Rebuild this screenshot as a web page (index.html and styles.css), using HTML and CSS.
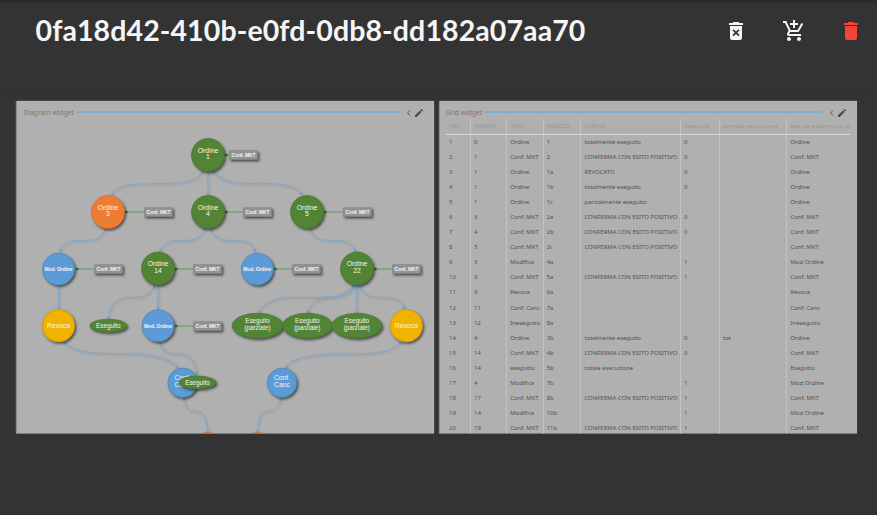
FILE: index.html
```html
<!DOCTYPE html>
<html lang="it">
<head>
<meta charset="utf-8">
<title>Dashboard</title>
<link rel="stylesheet" href="styles.css">
</head>
<body>
<header class="topbar">
  <h1 class="title">0fa18d42-410b-e0fd-0db8-dd182a07aa70</h1>
  <div class="actions">
    <svg class="icon" viewBox="0 0 24 24"><path fill-rule="evenodd" d="M6 19c0 1.1.9 2 2 2h8c1.1 0 2-.9 2-2V7H6v12zM8.500 11.500l1.200-1.200 2.300 2.300 2.300-2.300 1.200 1.200-2.300 2.300 2.300 2.300-1.200 1.200-2.300-2.300-2.300 2.300-1.200-1.200 2.300-2.300zM15.500 4l-1-1h-5l-1 1H5v2h14V4z"/></svg>
    <svg class="icon cart" viewBox="0 0 24 24"><path d="M11 9h2V6h3V4h-3V1h-2v3H8v2h3v3zm-4 9c-1.100 0-1.990.9-1.990 2S5.900 22 7 22s2-.9 2-2-.9-2-2-2zm10 0c-1.100 0-1.990.9-1.990 2s.89 2 1.990 2 2-.9 2-2-.9-2-2-2zm-9.830-3.250l.03-.12.9-1.630h7.450c.75 0 1.410-.41 1.750-1.030l3.860-7.010L19.420 4h-.01l-1.100 2-2.760 5H8.530l-.13-.27L6.160 6l-.95-2-.94-2H1v2h2l3.600 7.590-1.350 2.450c-.16.28-.25.61-.25.960 0 1.100.9 2 2 2h12v-2H7.420c-.13 0-.25-.11-.25-.25z"/></svg>
    <svg class="icon danger" viewBox="0 0 24 24"><path d="M6 19c0 1.100.9 2 2 2h8c1.100 0 2-.9 2-2V7H6v12zM19 4h-3.500l-1-1h-5l-1 1H5v2h14V4z"/></svg>
  </div>
</header>
<main class="widgets">
  <section class="widget">
    <div class="widget-head">
      <span class="widget-name">Diagram widget</span><span class="rule"></span>
      <svg class="tool chevron" viewBox="0 0 5 8"><path d="M4 1.500 1.500 4 4 6.500"/></svg>
      <svg class="tool pencil" viewBox="3 3 18 18"><path d="M3 17.250V21h3.750L17.810 9.940l-3.750-3.750L3 17.250zM20.710 7.040a1 1 0 0 0 0-1.410l-2.340-2.340a1 1 0 0 0-1.410 0l-1.830 1.830 3.750 3.750z"/></svg>
    </div>
    <svg class="diagram" viewBox="17 123 417 310">
      <defs>
        <marker id="blueTip" viewBox="0 0 4 4" refX="3.500" refY="2" markerWidth="2.800" markerHeight="2.800" orient="auto-start-reverse" markerUnits="userSpaceOnUse"><path d="M0 0 4 2 0 4z" fill="#5b9bd5"/></marker>
        <marker id="greenTip" viewBox="0 0 4 4" refX="4" refY="2" markerWidth="3.200" markerHeight="3.200" orient="auto-start-reverse" markerUnits="userSpaceOnUse"><path d="M0 1 4 0V4L0 3z" fill="#1f7a2c"/></marker>
        <filter id="shade" x="-30%" y="-30%" width="170%" height="180%"><feDropShadow dx="1.500" dy="1.700" stdDeviation="1.200" flood-color="#222" flood-opacity=".7"/></filter>
      </defs>
      <g id="links"></g>
      <g id="nodes"></g>
    </svg>
  </section>
  <section class="widget grid-widget">
    <div class="widget-head">
      <span class="widget-name">Grid widget</span><span class="rule"></span>
      <svg class="tool chevron" viewBox="0 0 5 8"><path d="M4 1.500 1.500 4 4 6.500"/></svg>
      <svg class="tool pencil" viewBox="3 3 18 18"><path d="M3 17.250V21h3.750L17.810 9.940l-3.750-3.750L3 17.250zM20.710 7.040a1 1 0 0 0 0-1.410l-2.340-2.340a1 1 0 0 0-1.410 0l-1.830 1.830 3.750 3.750z"/></svg>
    </div>
    <div class="table" id="table"></div>
  </section>
</main>
<script src="app.js"></script>
</body>
</html>
```
FILE: styles.css
```css
* { box-sizing: border-box; }
body {
  margin: 0;
  height: 515px;
  overflow: hidden;
  background: linear-gradient(#272727, #333 5px, #333);
  font-family: "Noto Sans", "Open Sans", sans-serif;
}
.topbar {
  height: 90px;
  padding: 0 14px 0 35.500px;
  display: flex;
  justify-content: space-between;
  align-items: flex-start;
  border-bottom: 1px solid #382f33;
}
.title {
  margin: 12.500px 0 0;
  font: 700 28.500px/34px Lato, "Open Sans", sans-serif;
  letter-spacing: .1px;
  color: #f5f5f5;
  white-space: nowrap;
}
.actions { display: flex; padding-top: 19px; gap: 33.500px; }
.icon { width: 24px; height: 24px; fill: #f5f5f5; }
.danger { fill: #f44336; }
.widgets {
  display: flex;
  gap: 4.500px;
  padding: 11px 0 0 16px;
}
.widget {
  width: 418px;
  height: 332.500px;
  background: #b0b0b0;
  border-left: 1px solid #8b8b8b;
  box-shadow: 0 0 2px #777;
  clip-path: inset(-1px -1px 0 -1px);
  overflow: hidden;
}
.widget-head {
  height: 22px;
  display: flex;
  align-items: center;
  padding: 2px 11px 0 6.500px;
}
.widget-name { font-size: 6.700px; line-height: 10px; color: #777; white-space: nowrap; }
.rule { flex: 1; height: 1.500px; background: #7daed2; margin: 0 7px 2px 3px; }
.tool { display: block; margin-bottom: 1px; }
.chevron { width: 5px; height: 8px; fill: none; stroke: #555; stroke-width: 1; }
.pencil { width: 8px; height: 8px; fill: #4b4b4b; margin-left: 4px; }
.diagram { display: block; width: 417px; height: 310px; font-family: "Liberation Sans", sans-serif; }
.link { fill: none; stroke: #7ea8cd; stroke-width: .9; filter: drop-shadow(1px 1.500px .8px rgba(60, 60, 60, .3)); }
.attach { stroke: #459a4b; stroke-width: .8; }
.shape { stroke-width: .6; filter: url(#shade); }
.green { fill: #538435; stroke: #42702a; }
.blue { fill: #5b9bd5; stroke: #4681b5; }
.orange { fill: #ed7d31; stroke: #ca6826; }
.yellow { fill: #efb300; stroke: #c48f00; }
.tag { fill: #939393; stroke: #808080; }
.caption { fill: #f4f4f4; text-anchor: middle; }
.grid-widget .widget-head { height: 18px; padding: 6px 10.500px 0 6px; }
.table { margin-left: 6.500px; width: 404px; overflow: hidden; }
.row {
  display: grid;
  grid-template-columns: 25px 36.200px 36.500px 37.800px 99.500px 39px 67.500px 62.500px;
  height: 15.050px;
}
.cell {
  padding-left: 3px;
  border-right: 1px solid #c3c3c3;
  font-size: 5.950px;
  line-height: 15px;
  color: #505050;
  white-space: nowrap;
  overflow: hidden;
}
.cell:last-child { border-right: 0; }
.row.head { height: 16px; border-bottom: 1px solid #dadada; }
.head .cell { color: #979797; line-height: 15px; }
```
FILE: app.js
```js
const headers = ["PRG", "PARENT", "TIPO", "PRGOLD", "STATUS", "revisione", "parziale esecuzione", "test da evidenziare pe"];
const OK = "CONFERMA CON ESITO POSITIVO";
const rows = [
  [1, 0, "Ordine", "1", "totalmente eseguito", 0, "", "Ordine"],
  [2, 1, "Conf. MKT", "2", OK, 0, "", "Conf. MKT"],
  [3, 1, "Ordine", "1a", "REVOCATO", 0, "", "Ordine"],
  [4, 1, "Ordine", "1b", "totalmente eseguito", 0, "", "Ordine"],
  [5, 1, "Ordine", "1c", "parzialmente eseguito", "", "", "Ordine"],
  [6, 3, "Conf. MKT", "2a", OK, 0, "", "Conf. MKT"],
  [7, 4, "Conf. MKT", "2b", OK, 0, "", "Conf. MKT"],
  [8, 5, "Conf. MKT", "2c", OK, "", "", "Conf. MKT"],
  [9, 3, "Modifica", "4a", "", 1, "", "Mod Ordine"],
  [10, 9, "Conf. MKT", "5a", OK, 1, "", "Conf. MKT"],
  [11, 9, "Revoca", "6a", "", "", "", "Revoca"],
  [12, 11, "Conf. Canc", "7a", "", "", "", "Conf. Canc"],
  [13, 12, "Ineseguito", "8a", "", "", "", "Ineseguito"],
  [14, 4, "Ordine", "3b", "totalmente eseguito", 0, "tot", "Ordine"],
  [15, 14, "Conf. MKT", "4b", OK, 0, "", "Conf. MKT"],
  [16, 14, "eseguito", "5b", "totale esecuzione", "", "", "Eseguito"],
  [17, 4, "Modifica", "7b", "", 1, "", "Mod Ordine"],
  [18, 17, "Conf. MKT", "8b", OK, 1, "", "Conf. MKT"],
  [19, 14, "Modifica", "10b", "", 1, "", "Mod Ordine"],
  [20, 19, "Conf. MKT", "11b", OK, 1, "", "Conf. MKT"]
];
const rowHtml = (r, c) => `<div class="row ${c}">${r.map(v => `<div class="cell">${v}</div>`).join("")}</div>`;
document.getElementById("table").innerHTML = rowHtml(headers, "head") + rows.map(r => rowHtml(r, "")).join("");

const links = [
  "M203 171C195 183 180 183 166 183.500L143 184C125 184 114 188 112 195",
  "M208 171L208.010 195",
  "M213 171C221 183 236 183.500 255 183.500C280 183 297 185 302 195",
  "M106 228C100 240 95 240 87 240.500H77C65 241 61 247 60 252",
  "M205 228C199 240 194 240 186 240.500H176C165 241 161 247 160 252",
  "M210 228C216 240 221 240 229 240.500H239C250 241 254 247 255 252",
  "M309 228C315 240 320 240 328 240.500H338C350 241 354 247 355 252",
  "M58.500 285L58.510 309",
  "M155 286C149 296 142 297 134 297.500H128C115 298 108 308 108.500 319",
  "M158 285L158.010 309",
  "M354 285C343 297 335 297 315 297.500H288C275 298 262 303 259 313",
  "M355 286C347 297 340 297 330 297.500C315 298 309 305 308 313",
  "M356.600 285L356.610 313",
  "M359 285C365 297 370 297 380 297.500C395 297 402 300 404 309",
  "M64 342C74 353 90 353.500 130 353.800C150 354 170 358 178 368",
  "M160 342C163 353 168 354 180 354C190 355 196 363 197 375",
  "M401 342C390 353 375 354 345 354C310 354 292 357 286 368",
  "M184 398C186 411 190 411 196 411.300C205 412 207 420 207.500 433",
  "M281 398C277 411 272 411 266 411.500C260 412 258 420 257.500 433"
];
// Attachment tags: node x, node y, distance of the tag from the node
const tags = [[208, 155, 21], [108, 212, 36], [208, 212, 35], [307, 212, 36], [59, 269, 35],
  [158, 269, 35], [257, 269, 35], [357, 269, 35], [158, 326, 35]];
// Nodes: x, y, rx, ry, colour, caption lines, font size
const nodes = [
  [208, 155, 16.500, 16.500, "green", ["Ordine", "1"], 6.800],
  [108, 212, 16.500, 16.500, "orange", ["Ordine", "3"], 6.800],
  [208, 212, 16.500, 16.500, "green", ["Ordine", "4"], 6.800],
  [307, 212, 16.500, 16.500, "green", ["Ordine", "5"], 6.800],
  [58.500, 269, 16, 16, "blue", ["Mod. Ordine"], 5],
  [158, 268.500, 16.500, 16.500, "green", ["Ordine", "14"], 6.800],
  [257.300, 269, 16, 16, "blue", ["Mod. Ordine"], 5],
  [357, 268.500, 16.500, 16.500, "green", ["Ordine", "22"], 6.800],
  [58.500, 325.700, 16.200, 16.200, "yellow", ["Revoca"], 6.800],
  [108.300, 325.700, 18.500, 6.500, "green", ["Eseguito"], 6.300],
  [158, 325.700, 16, 16, "blue", ["Mod. Ordine"], 5],
  [257.500, 325.700, 25.500, 12.500, "green", ["Eseguito", "(parziale)"], 6.300],
  [307.300, 325.700, 25, 12.500, "green", ["Eseguito", "(parziale)"], 6.300],
  [356.800, 325.700, 25, 12.500, "green", ["Eseguito", "(parziale)"], 6.300],
  [406.300, 325.700, 16.200, 16.200, "yellow", ["Revoca"], 6.800],
  [182.500, 382.700, 14.700, 14.700, "blue", ["Conf.", "Canc"], 6.800],
  [197.500, 382.500, 18.500, 6.500, "green", ["Eseguito"], 6.300],
  [282, 382.700, 14.700, 14.700, "blue", ["Conf.", "Canc"], 6.800],
  [207.500, 449, 16.500, 16.500, "orange", [], 6.800],
  [257.500, 449, 16.500, 16.500, "orange", [], 6.800]
];
document.getElementById("links").innerHTML =
  links.map(d => `<path class="link" d="${d}" marker-start="url(#blueTip)" marker-end="url(#blueTip)"/>`).join("");
document.getElementById("nodes").innerHTML =
  tags.map(([x, y, d]) =>
    `<path class="attach" d="M${x + 16.500} ${y}H${x + d}" marker-start="url(#greenTip)"/>` +
    `<rect class="shape tag" x="${x + d + .5}" y="${y - 4.200}" width="28" height="8.800"/>` +
    `<text class="caption" x="${x + d + 14.500}" y="${y + 2}" font-size="5" font-weight="700" textLength="24">Conf. MKT</text>`).join("") +
  nodes.map(([x, y, rx, ry, c, lines, fs]) =>
    `<ellipse class="shape ${c}" cx="${x}" cy="${y}" rx="${rx}" ry="${ry}"/>` +
    lines.map((t, i) =>
      `<text class="caption" x="${x}" y="${y + (lines.length > 1 ? -2.300 + i * 6.500 : 2)}" font-size="${fs}"${fs === 5 ? ' font-weight="700" textLength="28"' : ""}>${t}</text>`).join("")).join("");
```
